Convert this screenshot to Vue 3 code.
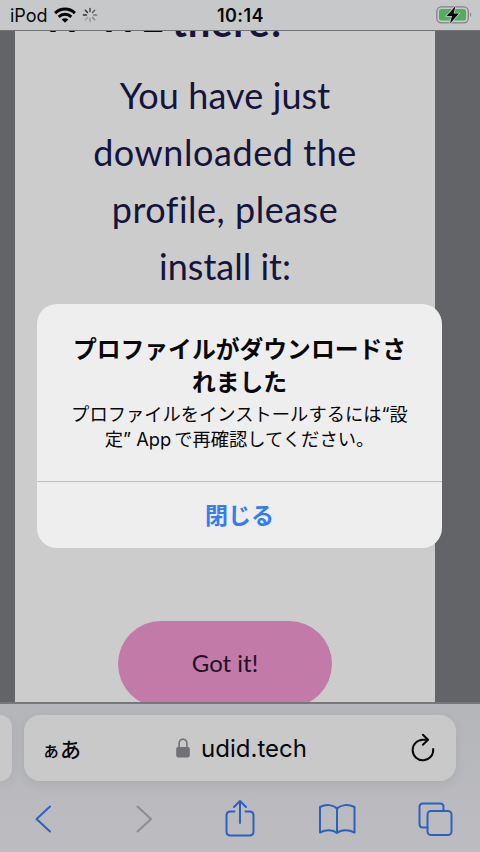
<script setup>
const lines = [
  { text: 'You have just', cls: 'l1' },
  { text: 'downloaded the', cls: 'l2' },
  { text: 'profile, please', cls: 'l3' },
  { text: 'install it:', cls: 'l4' },
]
const spokes = [1, 0.25, 0.3, 0.4, 0.5, 0.65, 0.8, 0.95]
</script>

<template>
  <div class="phone">
    <header class="status">
      <div class="carrier">
        <span class="device">iPod</span>
        <svg class="wifi" width="22" height="16" viewBox="0 0 22 16" fill="none" stroke="#050507" stroke-width="3">
          <path d="M1.1 6.1C6.7.7 15.3.7 20.9 6.1" />
          <path d="M4.7 9.9C8.3 6.4 13.7 6.4 17.3 9.9" />
          <path d="M11 15.8 7.7 12.5C9.5 10.8 12.5 10.8 14.3 12.5Z" fill="#050507" stroke="none" />
        </svg>
        <svg class="spinner" width="16" height="16" viewBox="-8 -8 16 16" stroke="#2b2b2e" stroke-width="1.5" stroke-linecap="round">
          <line v-for="(o, i) in spokes" :key="i" x1="0" y1="-3.6" x2="0" y2="-6.6" :opacity="o" :transform="`rotate(${-i * 45 - 90})`" />
        </svg>
      </div>
      <time class="clock">10:14</time>
      <svg class="battery" width="36" height="20" viewBox="0 0 36 20">
        <rect x=".8" y="1.8" width="31.5" height="16" rx="4.5" fill="none" stroke="#838487" stroke-width="1.3" />
        <rect x="3" y="4" width="27" height="11.6" rx="2.6" fill="#52ad5c" />
        <path d="M34 7.5Q36.5 9.7 34 12Z" fill="#838487" />
        <path d="M19.5 1 10.7 11H16L14 18.5 22.9 8.5H17.6Z" fill="#050507" stroke="#c7c8ca" stroke-width="1.6" paint-order="stroke" />
      </svg>
    </header>

    <main class="viewport">
      <section class="page">
        <h1 class="greeting">
          <span class="hey">H</span><span class="hey second">HE</span><span class="there">there!</span>
        </h1>
        <p class="copy">
          <span v-for="l in lines" :key="l.cls" class="line" :class="l.cls">{{ l.text }}</span>
        </p>
        <button class="got">Got it!</button>
      </section>
    </main>

    <footer class="toolbar">
      <div class="tabs">
        <div class="neighbor"></div>
        <div class="address">
          <span class="aa"><small>ぁ</small>あ</span>
          <span class="site">
            <svg class="lock" width="14" height="20" viewBox="0 0 14 20">
              <path d="M3.1 10V5.4a3.9 4.3 0 0 1 7.8 0V10" fill="none" stroke="#717175" stroke-width="1.6" />
              <rect x=".2" y="9" width="13.6" height="10.4" rx="1.8" fill="#717175" />
            </svg>
            <span class="host">udid.tech</span>
          </span>
          <svg class="reload" width="26" height="30" viewBox="0 0 26 30" fill="none" stroke="#08080a" stroke-width="2" stroke-linecap="round" stroke-linejoin="round">
            <path d="M23.2 16A10.300 10.300 0 1 1 12.900 6.700H18" />
            <path d="M12.900 1.800 18 6.700 12.900 11.800" />
          </svg>
        </div>
      </div>
      <nav class="actions">
        <svg width="96" height="44" viewBox="0 0 96 44" class="stroke"><path d="M50 10.5 36.5 23 50 35.5" /></svg>
        <svg width="96" height="44" viewBox="0 0 96 44" class="stroke off"><path d="M41.5 10.5 55 23 41.5 35.5" /></svg>
        <svg width="96" height="44" viewBox="0 0 96 44" class="stroke">
          <path d="M42.5 15.500H38.5Q34.500 15.500 34.500 19.500V35.500Q34.500 39.500 38.500 39.500H57.500Q61.500 39.500 61.500 35.500V19.500Q61.500 15.500 57.500 15.500H53.500M48 27V5.500M42 11 48 5 54 11" />
        </svg>
        <svg width="96" height="44" viewBox="0 0 96 44" class="stroke">
          <path d="M49 12.500C45 8.500 38 8 32 11V36.500C38 33.500 45 33.500 49 37C53 33.500 60.500 33.500 66.500 36.500V11C60.500 8 53 8.500 49 12.500V37" />
        </svg>
        <svg width="96" height="44" viewBox="0 0 96 44" class="stroke">
          <rect x="43.500" y="15" width="24" height="24" rx="3.500" /><path d="M43.500 31.500H39Q35.500 31.500 35.500 28V11Q35.500 7.500 39 7.500H56Q59.500 7.500 59.500 11V15" />
        </svg>
      </nav>
    </footer>

    <div class="alert" role="alertdialog">
      <div class="message">
        <h2>プロファイルがダウンロードさ<br />れました</h2>
        <p>プロファイルをインストールするには<span class="quote">“</span>設</p>
        <p>定<span class="quote">” App</span><span class="rest">で再確認してください。</span></p>
      </div>
      <button class="close">閉じる</button>
    </div>
  </div>
</template>

<style>
body { margin: 0; }
</style>

<style scoped>
* { box-sizing: border-box; }
button { border: 0; margin: 0; padding: 0; }
.phone {
  position: relative;
  display: flex;
  flex-direction: column;
  width: 480px;
  height: 852px;
  overflow: hidden;
  background: #636467;
  font-family: Inter, "Noto Sans CJK JP", sans-serif;
  color: #08080a;
}
.status {
  display: grid;
  grid-template-columns: 1fr auto 1fr;
  align-items: center;
  height: 31px;
  padding: 0 8px 0 10px;
  background: #c7c8ca;
  border-bottom: 1px solid #737477;
}
.carrier { display: flex; align-items: center; }
.device { font-size: 18px; width: 44px; }
.wifi { margin-right: 6px; }
.clock { font-size: 18px; font-weight: 600; letter-spacing: .4px; margin-right: 1px; }
.battery { justify-self: end; }
.viewport { height: 671px; overflow: hidden; padding: 0 45px 0 15px; }
.page {
  display: flex;
  flex-direction: column;
  align-items: center;
  height: 671px;
  overflow: hidden;
  background: #cccccc;
  font-family: Lato, sans-serif;
  color: #14143c;
}
.greeting {
  display: flex;
  flex: none;
  align-self: flex-start;
  height: 36px;
  margin: 0 0 0 32px;
  font-size: 40px;
  line-height: 50px;
  white-space: nowrap;
}
.greeting span { margin-top: -34px; }
.greeting .hey { width: 56px; margin-top: -39px; color: #08080a; }
.greeting .second { width: 69px; letter-spacing: 7px; }
.greeting .there { letter-spacing: .8px; }
.copy { flex: none; margin: 0; width: 100%; }
.line { display: block; height: 57px; line-height: 57px; font-size: 36px; text-align: center; white-space: nowrap; font-weight: 400; }
.l1 { letter-spacing: .1px; }
.l2 { letter-spacing: .55px; }
.l3 { letter-spacing: .5px; }
.l4 { letter-spacing: 0; }
.got {
  flex: none;
  width: 214px;
  height: 86px;
  margin-top: 326px;
  padding-bottom: 3px;
  border-radius: 43px;
  background: #c27ba8;
  font: 400 24px Lato, sans-serif;
  color: #22102a;
}
.toolbar {
  height: 150px;
  border-top: 2px solid #77787b;
  background: linear-gradient(#b5b6b9, #bcbcc1);
}
.tabs { display: flex; gap: 12px; padding-top: 11px; }
.neighbor, .address { height: 66px; background: #c9c9ca; box-shadow: 0 3px 12px rgba(0, 0, 0, .07); }
.neighbor { width: 12px; border-radius: 0 14px 14px 0; }
.address {
  display: grid;
  grid-template-columns: 1fr auto 1fr;
  align-items: center;
  width: 432px;
  padding: 0 20px;
  border-radius: 16px;
}
.aa { font: 500 21px "Noto Sans CJK JP", sans-serif; margin-left: -2px; }
.aa small { font-size: 18px; }
.site { display: flex; align-items: center; gap: 11px; margin-left: 3px; }
.host { font-size: 24px; }
.reload { justify-self: end; }
.actions { display: flex; height: 70px; padding-top: 15px; }
.stroke { fill: none; stroke: #2c62bd; stroke-width: 2; stroke-linecap: round; stroke-linejoin: round; }
.off { stroke: #8d8d91; }
.alert {
  position: absolute;
  left: 37px;
  top: 304px;
  width: 405px;
  height: 244px;
  overflow: hidden;
  border-radius: 20px;
  background: #eeeeef;
  text-align: center;
}
.message { height: 178px; padding-top: 27px; border-bottom: 1px solid #bdbdc0; white-space: nowrap; }
.message h2 { margin: 0 0 4px; font: 700 23.8px/33px "Noto Sans CJK JP", sans-serif; }
.message p { margin: 0; height: 25px; font: 400 18.3px/25px "Noto Sans CJK JP", sans-serif; }
.quote { font-family: Inter, sans-serif; line-height: 1; }
.rest { margin-left: 3px; }
.close { display: block; width: 100%; height: 66px; padding-bottom: 2px; background: none; color: #347df0; font: 700 23px "Noto Sans CJK JP", sans-serif; }
</style>
